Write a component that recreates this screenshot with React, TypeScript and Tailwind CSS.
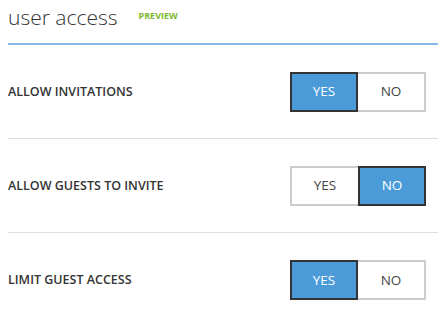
import React from "react";

function Toggle({ yes }: { yes: boolean }) {
  const on = "bg-[#4a9bd8] text-white border-[#333333]";
  const off = "bg-white text-[#444444] border-[#cccccc]";
  return (
    <div className="flex mr-[12px]">
      <div className={`w-[68px] h-[40px] border-2 flex items-center justify-center text-[13.5px] ${yes ? on : off + " border-r-0"}`}>YES</div>
      <div className={`w-[68px] h-[40px] border-2 flex items-center justify-center text-[13.5px] ${!yes ? on : off + " border-l-0"}`}>NO</div>
    </div>
  );
}

function Row({ label, yes, last }: { label: string; yes: boolean; last?: boolean }) {
  return (
    <div className={`h-[94px] flex items-center justify-between ${last ? "" : "border-b border-[#dddddd]"}`}>
      <div className="text-[12.5px] font-semibold text-[#333333] mt-[1px]">{label}</div>
      <Toggle yes={yes} />
    </div>
  );
}

export default function App() {
  return (
    <div className="w-[439px] h-[317px] bg-white pl-[8px] pr-[1px]" style={{ fontFamily: '"Open Sans", "Noto Sans", sans-serif' }}>
      <div className="h-[45px] flex items-start border-b-2 border-[#86b9e6]">
        <div className="mt-[3px] text-[21px] font-light text-[#333333] leading-[28px]">user access</div>
        <div className="ml-[21px] mt-[9px] text-[9px] font-bold text-[#7cb82f]">PREVIEW</div>
      </div>
      <Row label="ALLOW INVITATIONS" yes={true} />
      <Row label="ALLOW GUESTS TO INVITE" yes={false} />
      <Row label="LIMIT GUEST ACCESS" yes={true} last />
    </div>
  );
}
